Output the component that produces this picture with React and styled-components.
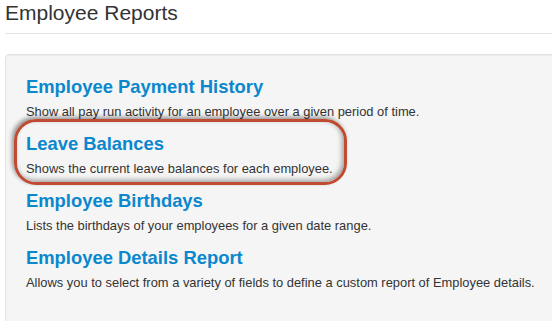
import React from 'react';
import styled, { createGlobalStyle } from 'styled-components';

const GlobalStyle = createGlobalStyle`
  html, body {
    margin: 0;
    padding: 0;
    background: #ffffff;
    overflow: hidden;
  }
  body {
    font-family: 'Liberation Sans', Arial, sans-serif;
    color: #333333;
  }
`;

const Page = styled.div`
  padding: 1px 0 0 5px;
  width: 560px;
`;

const PageHeader = styled.h1`
  margin: 0 0 20px;
  padding: 0 0 9px;
  border-bottom: 1px solid #e5e5e5;
  font-size: 21px;
  line-height: 23px;
  font-weight: normal;
  color: #333333;
`;

const Well = styled.div`
  background: #f5f5f5;
  border: 1px solid #e3e3e3;
  border-radius: 4px;
  box-shadow: inset 0 1px 1px rgba(0, 0, 0, 0.05);
  padding: 22px 20px 26px;
  min-height: 220px;
  display: flex;
  flex-direction: column;
  gap: 13px;
`;

const ReportItem = styled.div`
  position: relative;
`;

const ReportLink = styled.a`
  display: block;
  font-size: 18.4px;
  line-height: 20px;
  font-weight: bold;
  color: #0a87cd;
  text-decoration: none;
  margin-bottom: 6px;
`;

const ReportText = styled.p`
  margin: 0;
  font-size: 12.9px;
  line-height: 18px;
  color: #333333;
`;

const Highlight = styled.span`
  position: absolute;
  top: -15px;
  left: -12px;
  width: 333px;
  height: 66px;
  box-sizing: border-box;
  border: 3px solid #bf4b32;
  border-radius: 22px;
  box-shadow: -2px -2px 4px rgba(0, 0, 0, 0.4),
    inset -2px -2px 5px rgba(0, 0, 0, 0.35);
  pointer-events: none;
`;

const reports = [
  {
    title: 'Employee Payment History',
    text: 'Show all pay run activity for an employee over a given period of time.',
  },
  {
    title: 'Leave Balances',
    text: 'Shows the current leave balances for each employee.',
    highlighted: true,
  },
  {
    title: 'Employee Birthdays',
    text: 'Lists the birthdays of your employees for a given date range.',
  },
  {
    title: 'Employee Details Report',
    text: 'Allows you to select from a variety of fields to define a custom report of Employee details.',
  },
];

const App = () => (
  <>
    <GlobalStyle />
    <Page>
      <PageHeader>Employee Reports</PageHeader>
      <Well>
        {reports.map((report) => (
          <ReportItem key={report.title}>
            <ReportLink href='#'>{report.title}</ReportLink>
            <ReportText>{report.text}</ReportText>
            {report.highlighted && <Highlight />}
          </ReportItem>
        ))}
      </Well>
    </Page>
  </>
);

export default App;
